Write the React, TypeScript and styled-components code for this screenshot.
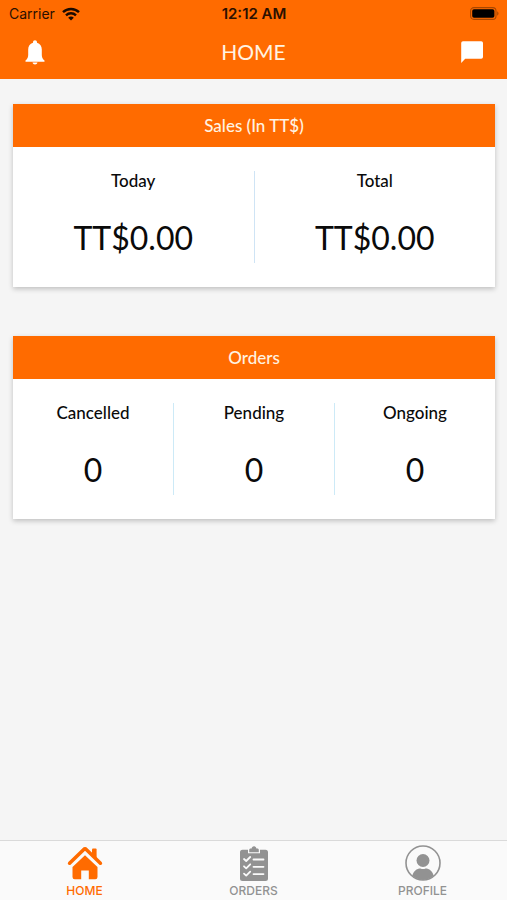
import React from "react";
import styled, { createGlobalStyle, css } from "styled-components";

const GlobalStyle = createGlobalStyle`
  * {
    box-sizing: border-box;
  }

  body {
    margin: 0;
    background: #f5f5f5;
    color: #0a0a0a;
    font-family: Lato, "Liberation Sans", sans-serif;
  }

  h1,
  h2,
  dl,
  dt,
  dd {
    margin: 0;
    font-weight: 400;
  }
`;

const BRAND = "#ff6b00";

const Screen = styled.div`
  min-height: 100vh;
  display: flex;
  flex-direction: column;
`;

const Header = styled.header`
  background: ${BRAND};
`;

const StatusBar = styled.div`
  display: grid;
  grid-template-columns: 1fr auto 1fr;
  align-items: center;
  height: 27px;
  padding: 0 8px 0 9px;
  color: #2a1000;
  font-family: Inter, "Liberation Sans", sans-serif;
  font-size: 14px;
  line-height: 20px;
`;

const Carrier = styled.div`
  display: flex;
  align-items: center;
  gap: 7px;
`;

const Clock = styled.time`
  font-size: 15px;
  font-weight: 600;
`;

const BatterySlot = styled.div`
  display: flex;
  justify-content: flex-end;
`;

const TitleBar = styled.div`
  display: flex;
  align-items: center;
  justify-content: space-between;
  height: 52px;
  padding: 0 20px 2px;
`;

const Title = styled.h1`
  color: #fff3e2;
  font-size: 21px;
  line-height: 28px;
`;

const IconButton = styled.button`
  display: flex;
  align-items: center;
  justify-content: center;
  width: 30px;
  height: 30px;
  padding: 0;
  border: 0;
  background: none;
  color: #fff;
  cursor: pointer;
`;

const Content = styled.main`
  flex: 1;
  display: flex;
  flex-direction: column;
  gap: 49px;
  padding: 25px 12px 24px 13px;
`;

const Card = styled.section`
  background: #fff;
  box-shadow: 0 2px 5px rgba(0, 0, 0, 0.22);
`;

const CardTitle = styled.h2`
  padding: 10px;
  background: ${BRAND};
  color: #fff3e2;
  font-size: 17px;
  font-weight: 500;
  line-height: 23px;
  text-align: center;
`;

const Stats = styled.dl`
  display: flex;
  padding: 24px 0;
`;

const Stat = styled.div<{ $divider: string }>`
  flex: 1;
  display: flex;
  flex-direction: column;
  gap: 26px;
  height: 92px;
  text-align: center;

  &:not(:last-child) {
    border-right: 1px solid ${(p) => p.$divider};
  }
`;

const StatLabel = styled.dt`
  font-size: 17px;
  font-weight: 500;
  line-height: 20px;
`;

const StatValue = styled.dd`
  font-size: 32px;
  line-height: 42px;
`;

const TabBar = styled.nav`
  display: flex;
  height: 60px;
  border-top: 1px solid #dadada;
  background: #fafafa;
`;

const Tab = styled.a<{ $active?: boolean }>`
  flex: 1;
  display: flex;
  flex-direction: column;
  align-items: center;
  gap: 2px;
  padding-top: 4px;
  color: #929292;
  font-family: Inter, "Liberation Sans", sans-serif;
  font-size: 12px;
  font-weight: 500;
  line-height: 15px;
  text-decoration: none;

  ${(p) =>
    p.$active &&
    css`
      color: ${BRAND};
    `}
`;

const WifiIcon = () => (
  <svg width="18" height="14" viewBox="0 0 18 14" aria-hidden="true">
    <g fill="none" stroke="#1a0a00" strokeWidth="2.4">
      <path d="M1 5.2C5.4.9 12.6.9 17 5.2" />
      <path d="M4 8.3c2.8-2.7 7.2-2.7 10 0" />
    </g>
    <path d="M6.2 10.7c1.6-1.5 4-1.5 5.6 0L9 13.6z" fill="#1a0a00" />
  </svg>
);

const BatteryIcon = () => (
  <svg width="29" height="13" viewBox="0 0 29 13" aria-hidden="true">
    <rect x=".6" y=".6" width="25.4" height="11.8" rx="3.4" fill="none" stroke="#a84700" strokeWidth="1.1" />
    <rect x="2.2" y="2.2" width="22.2" height="8.6" rx="1.8" fill="#000" />
    <path d="M27.2 4.3v4.4c1.8-.7 1.8-3.7 0-4.4z" fill="#a84700" />
  </svg>
);

const BellIcon = () => (
  <svg width="20" height="25" viewBox="0 0 20 25" aria-hidden="true" fill="currentColor">
    <path d="M10 .3c-1.2 0-2 .8-2 1.900v.6C4.800 3.700 3.200 6.400 3.200 9.500v5.200c0 2.300-.5 4-2.700 5.800v1.200h19v-1.200c-2.200-1.800-2.700-3.500-2.700-5.800V9.500c0-3.100-1.600-5.800-4.800-6.700v-.6C12 1.100 11.200.3 10 .3z" />
    <path d="M7.500 22.600h5c-.3 1.200-1.200 1.900-2.500 1.900s-2.200-.7-2.500-1.900z" />
  </svg>
);

const ChatIcon = () => (
  <svg width="24" height="24" viewBox="0 0 24 24" aria-hidden="true" fill="currentColor">
    <path d="M3 1.200h18.200a1.800 1.800 0 0 1 1.800 1.800v14a1.800 1.800 0 0 1-1.800 1.800H5.200L1.200 23V3A1.800 1.800 0 0 1 3 1.200z" />
  </svg>
);

const HomeIcon = () => (
  <svg width="36" height="36" viewBox="0 0 36 36" aria-hidden="true">
    <path d="M25 4.500a1 1 0 0 1 1-1h2.600a1 1 0 0 1 1 1v9L25 9.200z" fill="currentColor" />
    <path d="M2.600 18.200 16.500 4.700a2.200 2.200 0 0 1 3 0l13.900 13.500" fill="none" stroke="currentColor" strokeWidth="3.600" strokeLinecap="round" strokeLinejoin="round" />
    <path d="M18 10.200 30.500 22v10a2.200 2.200 0 0 1-2.200 2.200h-6.500v-8.700h-7.600v8.700H7.700A2.200 2.200 0 0 1 5.500 32V22z" fill="currentColor" />
  </svg>
);

const OrdersIcon = () => (
  <svg width="36" height="36" viewBox="0 0 36 36" aria-hidden="true">
    <path d="M6.500 4.800H12v3.500h12V4.800h5.500A2.500 2.500 0 0 1 32 7.300v26.200a2.500 2.500 0 0 1-2.500 2.500h-23A2.500 2.500 0 0 1 4 33.500V7.300a2.500 2.500 0 0 1 2.500-2.500z" fill="currentColor" />
    <path d="M13.200 7.200V4.900c0-.8.6-1.400 1.400-1.400h1c.1-1.300 1-2.300 2.400-2.300s2.300 1 2.400 2.300h1c.8 0 1.400.6 1.400 1.400v2.300z" fill="currentColor" />
    <g fill="none" stroke="#fafafa" strokeWidth="1.800" strokeLinecap="round" strokeLinejoin="round">
      <path d="m8 14 2.200 2 4-4M8 21.300l2.200 2 4-4M8 28.600l2.200 2 4-4" />
      <path d="M17.500 14.500h10M17.500 21.800h10M17.500 29.100h10" />
    </g>
  </svg>
);

const ProfileIcon = () => (
  <svg width="36" height="36" viewBox="0 0 36 36" aria-hidden="true">
    <circle cx="18" cy="18" r="17" fill="none" stroke="currentColor" strokeWidth="1.600" />
    <circle cx="18" cy="15.500" r="6.500" fill="currentColor" />
    <path d="M7.300 30.800c1-4.600 4.500-7.300 8.200-7.300 1.600.8 3.400.8 5 0 3.700 0 7.200 2.700 8.200 7.300A17 17 0 0 1 18 35a17 17 0 0 1-10.700-4.200z" fill="currentColor" />
  </svg>
);

type StatItem = { label: string; value: string };

const sales: StatItem[] = [
  { label: "Today", value: "TT$0.00" },
  { label: "Total", value: "TT$0.00" },
];

const orders: StatItem[] = [
  { label: "Cancelled", value: "0" },
  { label: "Pending", value: "0" },
  { label: "Ongoing", value: "0" },
];

type StatCardProps = { title: string; items: StatItem[]; divider: string };

const StatCard = ({ title, items, divider }: StatCardProps) => (
  <Card>
    <CardTitle>{title}</CardTitle>
    <Stats>
      {items.map((item) => (
        <Stat key={item.label} $divider={divider}>
          <StatLabel>{item.label}</StatLabel>
          <StatValue>{item.value}</StatValue>
        </Stat>
      ))}
    </Stats>
  </Card>
);

export default function App() {
  return (
    <>
      <GlobalStyle />
      <Screen>
        <Header>
          <StatusBar>
            <Carrier>
              Carrier
              <WifiIcon />
            </Carrier>
            <Clock>12:12 AM</Clock>
            <BatterySlot>
              <BatteryIcon />
            </BatterySlot>
          </StatusBar>
          <TitleBar>
            <IconButton type="button" aria-label="Notifications">
              <BellIcon />
            </IconButton>
            <Title>HOME</Title>
            <IconButton type="button" aria-label="Messages">
              <ChatIcon />
            </IconButton>
          </TitleBar>
        </Header>
        <Content>
          <StatCard title="Sales (In TT$)" items={sales} divider="#cfe4f5" />
          <StatCard title="Orders" items={orders} divider="#cdeaf7" />
        </Content>
        <TabBar>
          <Tab href="#home" $active aria-current="page">
            <HomeIcon />
            HOME
          </Tab>
          <Tab href="#orders">
            <OrdersIcon />
            ORDERS
          </Tab>
          <Tab href="#profile">
            <ProfileIcon />
            PROFILE
          </Tab>
        </TabBar>
      </Screen>
    </>
  );
}
